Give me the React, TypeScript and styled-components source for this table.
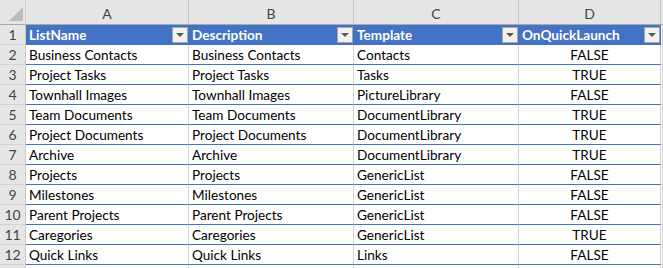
import styled, { createGlobalStyle, css } from "styled-components";

const GlobalStyle = createGlobalStyle`
  html, body {
    margin: 0;
    padding: 0;
    background: #ffffff;
  }
  body {
    font-family: "Lato", "Liberation Sans", sans-serif;
  }
`;

type Row = [string, string, string, string];

const columns = ["A", "B", "C", "D"];
const headers = ["ListName", "Description", "Template", "OnQuickLaunch"];

const rows: Row[] = [
  ["Business Contacts", "Business Contacts", "Contacts", "FALSE"],
  ["Project Tasks", "Project Tasks", "Tasks", "TRUE"],
  ["Townhall Images", "Townhall Images", "PictureLibrary", "FALSE"],
  ["Team Documents", "Team Documents", "DocumentLibrary", "TRUE"],
  ["Project Documents", "Project Documents", "DocumentLibrary", "TRUE"],
  ["Archive", "Archive", "DocumentLibrary", "TRUE"],
  ["Projects", "Projects", "GenericList", "FALSE"],
  ["Milestones", "Milestones", "GenericList", "FALSE"],
  ["Parent Projects", "Parent Projects", "GenericList", "FALSE"],
  ["Caregories", "Caregories", "GenericList", "TRUE"],
  ["Quick Links", "Quick Links", "Links", "FALSE"],
];

const StyledSheet = styled.div`
  display: grid;
  grid-template-columns: 26px 163px 165px 165px 142px 1fr;
  grid-template-rows: 25px;
  grid-auto-rows: 20px;
  width: 663px;
  height: 268px;
  overflow: hidden;
  font-size: 13.6px;
  color: #000;
`;

const StyledCorner = styled.div`
  display: flex;
  align-items: flex-end;
  justify-content: flex-end;
  padding: 0 2px 3px 0;
  background: #e6e6e6;
  border-right: 1px solid #d0d0d0;
  border-bottom: 1px solid #a9a9a9;
`;

const StyledColHead = styled.div`
  display: flex;
  align-items: center;
  justify-content: center;
  background: #e6e6e6;
  color: #444;
  font-size: 14px;
  border-right: 1px solid #c8c8c8;
  border-bottom: 1px solid #a9a9a9;
  padding-top: 2px;
`;

const StyledRowHead = styled.div`
  display: flex;
  align-items: center;
  justify-content: center;
  background: #e6e6e6;
  color: #444;
  font-size: 14px;
  border-right: 1px solid #c8c8c8;
  border-bottom: 1px solid #d4d4d4;
`;

const StyledHeaderCell = styled.div`
  display: flex;
  align-items: center;
  justify-content: space-between;
  padding-left: 3px;
  background: #4472c4;
  color: #fff;
  font-weight: bold;
  border-bottom: 1px solid #4472c4;
  white-space: nowrap;
  overflow: hidden;
`;

const StyledFilterButton = styled.span`
  display: flex;
  align-items: center;
  justify-content: center;
  width: 16px;
  height: 16px;
  box-sizing: border-box;
  margin-right: 1px;
  background: #f2f2f2;
  border: 1px solid #a6a6a6;

  &::after {
    content: "";
    border-left: 4px solid transparent;
    border-right: 4px solid transparent;
    border-top: 4px solid #595959;
  }
`;

const StyledCell = styled.div<{ $center?: boolean }>`
  display: flex;
  align-items: center;
  padding: 1px 3px 0;
  white-space: nowrap;
  overflow: hidden;
  border-right: 1px solid #d4d4d4;
  border-bottom: 1px solid #4472c4;
  ${(p) =>
    p.$center &&
    css`
      justify-content: center;
    `}
`;

const StyledSpareCell = styled.div`
  border-right: 1px solid #d4d4d4;
  border-bottom: 1px solid #d4d4d4;
`;

const StyledHeadSpare = styled.div`
  background: #e6e6e6;
  border-bottom: 1px solid #a9a9a9;
`;

const CornerTriangle = () => (
  <svg width="14" height="14" viewBox="0 0 14 14">
    <polygon points="14,0 14,14 0,14" fill="#bcbcbc" />
  </svg>
);

const DataRow = ({ index, row }: { index: number; row: Row }) => (
  <>
    <StyledRowHead>{index}</StyledRowHead>
    <StyledCell>{row[0]}</StyledCell>
    <StyledCell>{row[1]}</StyledCell>
    <StyledCell>{row[2]}</StyledCell>
    <StyledCell $center>{row[3]}</StyledCell>
    <StyledSpareCell />
  </>
);

export default function App() {
  return (
    <>
      <GlobalStyle />
      <StyledSheet>
        <StyledCorner>
          <CornerTriangle />
        </StyledCorner>
        {columns.map((c) => (
          <StyledColHead key={c}>{c}</StyledColHead>
        ))}
        <StyledHeadSpare />

        <StyledRowHead>1</StyledRowHead>
        {headers.map((h) => (
          <StyledHeaderCell key={h}>
            {h}
            <StyledFilterButton />
          </StyledHeaderCell>
        ))}
        <StyledSpareCell />

        {rows.map((row, i) => (
          <DataRow key={i} index={i + 2} row={row} />
        ))}

        <StyledRowHead />
        <StyledSpareCell />
        <StyledSpareCell />
        <StyledSpareCell />
        <StyledSpareCell />
        <StyledSpareCell />
      </StyledSheet>
    </>
  );
}
